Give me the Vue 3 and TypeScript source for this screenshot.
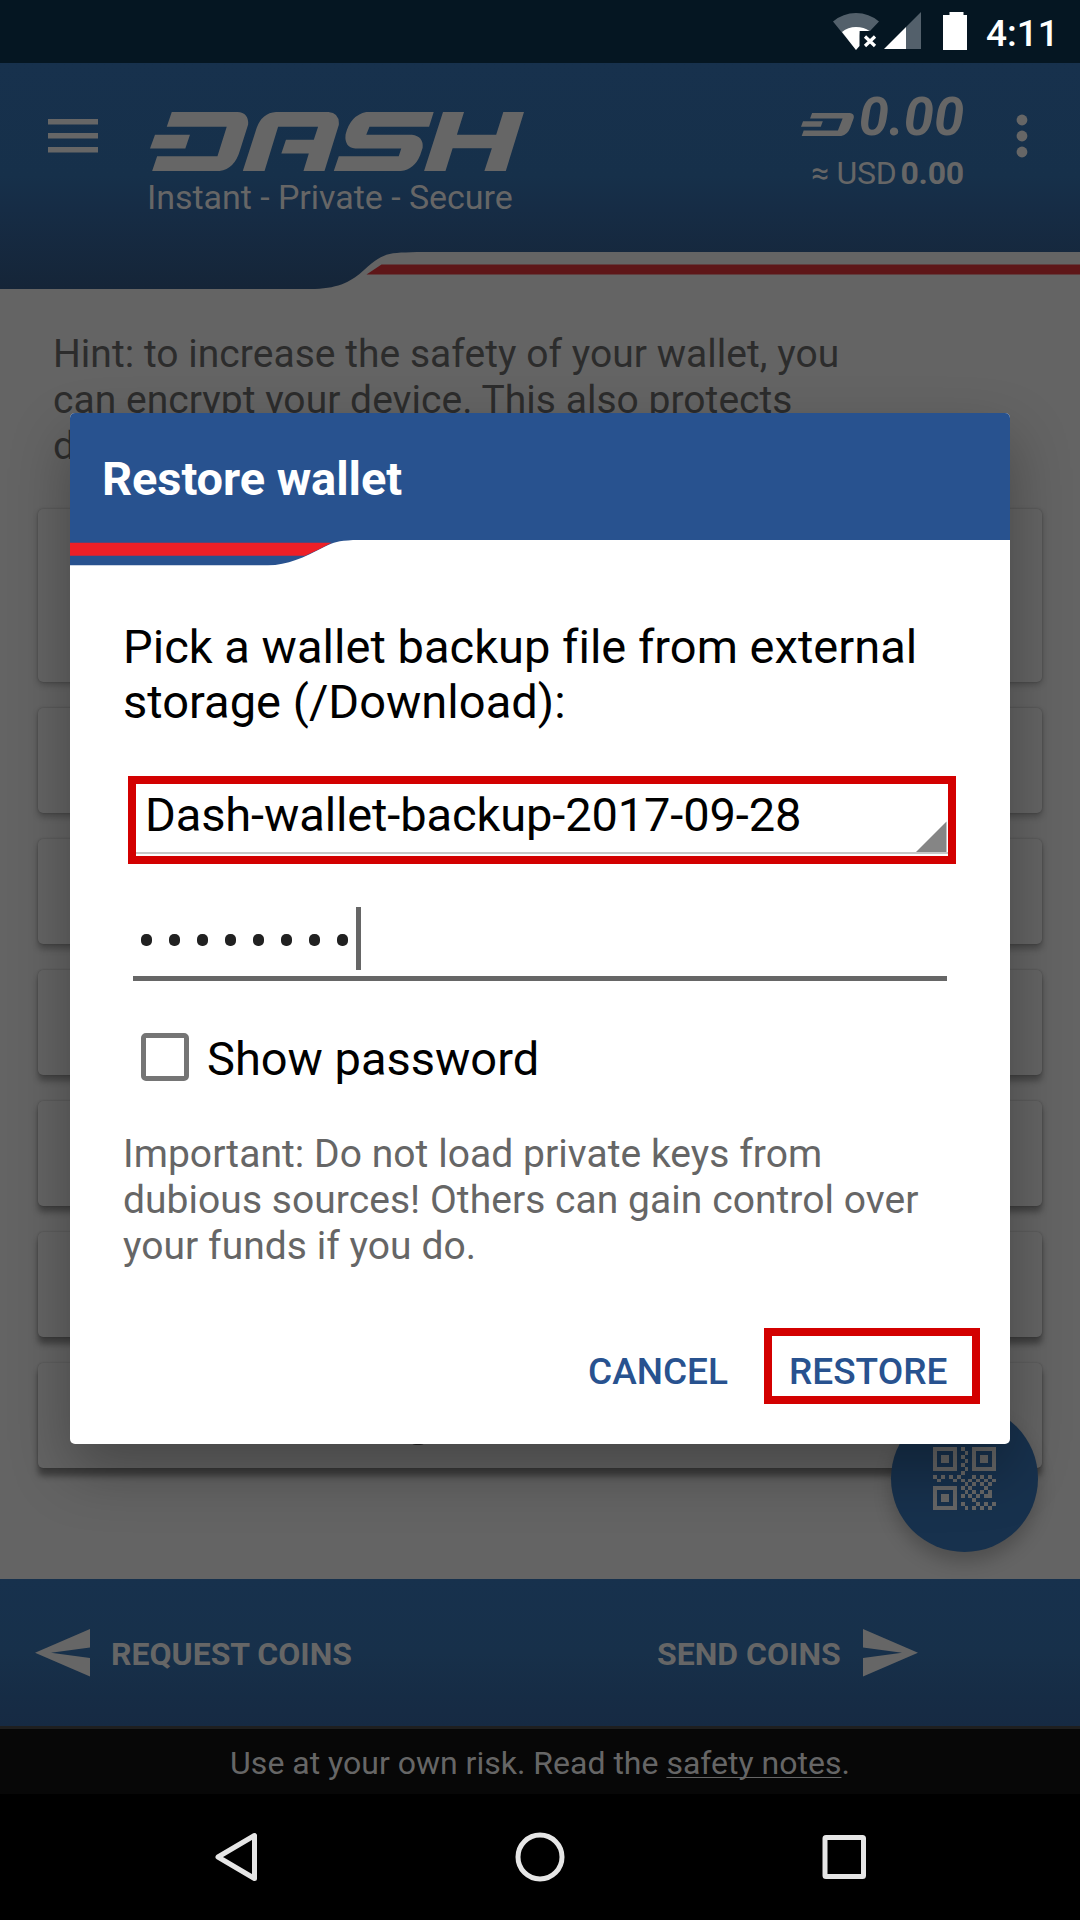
<script setup lang="ts">
import { ref } from 'vue'

const hintLines: string[] = [
  'Hint: to increase the safety of your wallet, you',
  'can encrypt your device. This also protects',
  'd',
]
const warningLines: string[] = [
  'Important: Do not load private keys from',
  'dubious sources! Others can gain control over',
  'your funds if you do.',
]
const cardHeights: number[] = [173, 105, 105, 105, 105, 105, 105]
const backupFile = ref<string>('Dash-wallet-backup-2017-09-28')
const passwordLength = ref<number>(8)

const qrRows: string[] = [
  '1111110100111111',
  '1000010010100001',
  '1011010100101101',
  '1011010010101101',
  '1000010100100001',
  '1111110010111111',
  '0000000100000000',
  '1010101000101010',
  '0100010101010101',
  '0000000010101010',
  '1111110101000100',
  '1000010010101010',
  '1011010101010110',
  '1011010000100000',
  '1000010100010101',
  '1111110010101010',
]
const qrCells = qrRows.flatMap((row, y) =>
  [...row].flatMap((cell, x) => (cell === '1' ? [{ x, y }] : [])),
)
</script>

<template>
  <div class="screen">
    <div class="status">
      <svg class="status-icons" width="140" height="63" viewBox="830 0 140 63">
        <path d="M856 50 833 21.500Q843 13 856 13T879 21.500L870 31H860Z" fill="#53606b" />
        <path d="M856 50 842 32Q848 27 856 27T869.500 31H859.500V46Z" fill="#fff" />
        <path d="M865 36.500l10 9.500M875 36.500l-10 9.500" stroke="#fff" stroke-width="3.200" />
        <path d="M906 27 921 12V49H906Z" fill="#53606b" />
        <path d="M884 49 906 27V49Z" fill="#fff" />
        <path d="M943 15H949.500V12H963.500V15H967V50H943Z" fill="#fff" />
      </svg>
      <span class="time">4:11</span>
    </div>

    <header class="header">
      <svg class="menu" width="50" height="34" viewBox="0 0 50 34">
        <path d="M0 0h50v5.500H0zM0 14h50v5.500H0zM0 28h50v5.500H0z" fill="#666" />
      </svg>
      <div class="brand">
        <svg class="logo" viewBox="419 155 1048 176" preserveAspectRatio="none" role="img" aria-label="Dash">
          <g fill="#666">
            <path d="M480 155H664Q696 157 694 192L671 270Q656 325 614 331H425L439 287H608L634 199H466Z" />
            <path d="M433 223H531L518 264H419Z" />
            <path d="M679 331 718 202Q733 158 772 155H919Q951 158 948 194L908 331H849L864 279H787L800 238H878L890 199H778L740 331Z" />
            <path d="M1214 155 1201 199H1034L1025 223H1153Q1186 228 1183 262L1176 284Q1160 326 1122 331H934L948 287H1116L1123 264H994Q963 260 967 222Q980 165 1025 155Z" />
            <path d="M1240 155H1299L1279 223H1389L1409 155H1467L1416 331H1356L1377 263H1267L1247 331H1187Z" />
          </g>
        </svg>
        <div class="tagline">Instant - Private - Secure</div>
      </div>
      <div class="balance">
        <div class="amount">
          <svg width="53" height="23" viewBox="64 338 158 67" preserveAspectRatio="none">
            <path d="M97 338H210Q224 340 221 353L211 380Q203 401 184 405H66L72 389H174L188 354H91Z M70 362H129L123 378H64Z" fill="#666" />
          </svg>
          <span>0.00</span>
        </div>
        <div class="fiat"><span class="cur">≈ USD</span><b>0.00</b></div>
      </div>
      <svg class="more" width="12" height="44" viewBox="0 0 12 44">
        <g fill="#666"><circle cx="6" cy="6" r="5.400" /><circle cx="6" cy="22" r="5.400" /><circle cx="6" cy="38" r="5.400" /></g>
      </svg>
      <svg class="swoosh" width="780" height="37" viewBox="300 252 780 37">
        <path d="M315 289C340 288 352 281 364 270C384 252 388 253 417 252H1080V289Z" fill="#646464" />
        <path d="M366.500 274.500 381.500 264.500H1080V274.500Z" fill="#5e1618" />
      </svg>
    </header>

    <main class="content">
      <div class="hint">
        <div v-for="line in hintLines" :key="line">{{ line }}</div>
      </div>
      <div class="cards">
        <div
          v-for="(h, i) in cardHeights"
          :key="i"
          class="card"
          :style="{ height: h + 'px', '--lift': 3 + i * 0.7 + 'px', '--shade': 0.22 + i * 0.03 }"
        ></div>
      </div>
      <i class="descender"></i>
      <div class="fab">
        <svg width="63" height="63" viewBox="0 0 16 16" shape-rendering="crispEdges">
          <rect v-for="c in qrCells" :key="c.x + '-' + c.y" :x="c.x" :y="c.y" width="1" height="1" fill="#666" />
        </svg>
      </div>
    </main>

    <div class="actions">
      <div class="action">
        <svg width="55" height="48" viewBox="0 0 55 48"><path d="M0 23.700 55 0V18.500L16 23.700 55 29V47.500Z" fill="#666" /></svg>
        <span class="request">REQUEST COINS</span>
      </div>
      <div class="action send">
        <span>SEND COINS</span>
        <svg width="55" height="48" viewBox="0 0 55 48"><path d="M55 23.700 0 0V18.500L39 23.700 0 29V47.500Z" fill="#666" /></svg>
      </div>
    </div>
    <div class="footer"><span>Use at your own risk. Read the <u>safety notes</u>.</span></div>
    <nav class="nav">
      <svg width="50" height="50" viewBox="0 0 50 50"><path d="M43.500 3.500V46.500L7 25Z" /></svg>
      <svg width="50" height="50" viewBox="0 0 50 50"><circle cx="25" cy="25" r="22" /></svg>
      <svg width="50" height="50" viewBox="0 0 50 50"><rect x="6" y="5.500" width="38.500" height="39" rx="1" /></svg>
    </nav>

    <div class="dialog">
      <div class="title">Restore wallet</div>
      <div class="body">
        <svg class="accent" width="290" height="26" viewBox="70 540 290 26">
          <path d="M70 540H353C338 541 334 542 325 546.500C303 558 288 565 268 565.300H70Z" fill="#28528f" />
          <path d="M70 542.700H331.500Q318 550 305 555.800H70Z" fill="#ed1f27" />
        </svg>
        <div class="message">
          <div>Pick a wallet backup file from external</div>
          <div>storage (/Download):</div>
        </div>
        <div class="spinner">
          <span>{{ backupFile }}</span>
          <svg width="33" height="33" viewBox="0 0 33 33"><path d="M0 33 32.500 0.500V33Z" fill="#858585" /></svg>
        </div>
        <div class="password">
          <i v-for="n in passwordLength" :key="n" class="dot"></i>
          <i class="caret"></i>
        </div>
        <div class="check"><i class="box"></i><span>Show password</span></div>
        <div class="warning">
          <div v-for="line in warningLines" :key="line">{{ line }}</div>
        </div>
        <div class="buttons">
          <span class="cancel">CANCEL</span>
          <span class="restore">RESTORE</span>
        </div>
      </div>
    </div>
  </div>
</template>

<style>
body {
  margin: 0;
  background: #000;
}
</style>

<style scoped>
.screen {
  position: relative;
  width: 1080px;
  height: 1920px;
  overflow: hidden;
  display: flex;
  flex-direction: column;
  background: #646464;
  font-family: Roboto, "Liberation Sans", sans-serif;
  white-space: nowrap;
}
svg {
  display: block;
  flex: none;
}
i {
  display: block;
}
.status {
  height: 63px;
  flex: none;
  display: flex;
  justify-content: flex-end;
  background: #051622;
  color: #fff;
}
.time {
  width: 94px;
  margin-left: 16px;
  font-size: 37px;
  font-weight: 500;
  line-height: 67px;
}
.header {
  position: relative;
  height: 226px;
  flex: none;
  display: flex;
  background: linear-gradient(#17314d 0%, #16304a 50%, #162c45 65%, #152538 100%);
  color: #666;
}
.menu {
  margin: 56px 0 0 48px;
}
.brand {
  width: 560px;
  margin: 49px 0 0 52px;
}
.logo {
  width: 374px;
  height: 59px;
}
.tagline {
  margin: 6px 0 0 -3px;
  font-size: 34px;
  letter-spacing: -0.04px;
  line-height: 40px;
}
.balance {
  width: 254px;
  padding-top: 30px;
  display: flex;
  flex-direction: column;
  align-items: flex-end;
}
.amount {
  display: flex;
  font-size: 54px;
  font-weight: 700;
  font-style: italic;
  line-height: 48px;
}
.amount svg {
  margin: 20px 5px 0 0;
}
.fiat {
  font-size: 32px;
  line-height: 40px;
  margin-top: 12px;
}
.cur {
  letter-spacing: -0.3px;
}
.fiat b {
  margin-left: 4px;
  letter-spacing: -0.2px;
}
.more {
  margin: 51px 0 0 52px;
}
.swoosh {
  position: absolute;
  right: 0;
  bottom: 0;
}
.content {
  position: relative;
  height: 1290px;
  flex: none;
}
.hint {
  padding: 42px 0 0 53px;
  font-size: 39px;
  letter-spacing: 0.03px;
  line-height: 46px;
  color: #2c2c2c;
}
.cards {
  margin: 40px 38px 0;
  display: flex;
  flex-direction: column;
  gap: 26px;
}
.card {
  border-radius: 5px;
  background: #646464;
  box-shadow: 0 var(--lift) 6px rgba(0, 0, 0, var(--shade)), 0 0 2px rgba(0, 0, 0, 0.25);
}
.descender {
  position: absolute;
  left: 409px;
  top: 1147px;
  width: 18px;
  height: 9px;
  border-radius: 0 0 7px 7px;
  background: #222;
}
.fab {
  position: absolute;
  left: 891px;
  top: 1116px;
  width: 147px;
  height: 147px;
  border-radius: 50%;
  display: flex;
  align-items: center;
  justify-content: center;
  background: #17314d;
  box-shadow: 0 10px 18px rgba(0, 0, 0, 0.22);
}
.actions {
  height: 147px;
  flex: none;
  display: flex;
  border-bottom: 3px solid #1f1f1f;
  background: linear-gradient(#17314d 0%, #17304a 50%, #162c45 80%, #162a43 100%);
  color: #666;
  font-size: 32px;
  font-weight: 700;
}
.action {
  width: 623px;
  display: flex;
  padding: 50px 0 0 35px;
  box-sizing: border-box;
  line-height: 48px;
}
.action span {
  padding-top: 1px;
}
.request {
  margin-left: 21px;
}
.send {
  width: 457px;
  padding-left: 34px;
}
.send svg {
  margin-left: 22px;
}
.footer {
  height: 65px;
  flex: none;
  background: #070707;
  color: #666;
  font-size: 32px;
  line-height: 69px;
  text-align: center;
}
.footer u {
  text-decoration-thickness: 1px;
  text-underline-offset: 3px;
  text-decoration-skip-ink: none;
}
.nav {
  height: 126px;
  flex: none;
  display: flex;
  align-items: center;
  justify-content: center;
  gap: 254px;
  background: #000;
}
.nav svg {
  fill: none;
  stroke: #e6e6e6;
  stroke-width: 5px;
  stroke-linejoin: round;
}
.dialog {
  position: absolute;
  left: 70px;
  top: 413px;
  width: 940px;
  height: 1031px;
  border-radius: 5px;
  background: #fff;
  box-shadow: 0 26px 60px rgba(0, 0, 0, 0.3);
  display: flex;
  flex-direction: column;
  color: #000;
  font-size: 47px;
}
.title {
  height: 127px;
  flex: none;
  padding-left: 32px;
  border-radius: 5px 5px 0 0;
  background: #28528f;
  color: #fff;
  font-weight: 700;
  font-size: 47px;
  letter-spacing: -0.08px;
  line-height: 132px;
}
.body {
  position: relative;
  flex: 1;
  padding-top: 79px;
  display: flex;
  flex-direction: column;
}
.accent {
  position: absolute;
  left: 0;
  top: 0;
}
.message {
  padding-left: 53px;
  letter-spacing: 0.03px;
  line-height: 55px;
}
.spinner {
  position: relative;
  margin: 47px 54px 0 58px;
  height: 88px;
  box-sizing: border-box;
  border: 8px solid #d30000;
  padding: 3px 1px 0 9px;
  display: flex;
  justify-content: space-between;
  letter-spacing: -0.11px;
  line-height: 56px;
}
.spinner svg {
  margin-top: 34px;
}
.spinner::after {
  content: "";
  position: absolute;
  left: 0;
  right: 0;
  bottom: 2px;
  height: 2px;
  background: #c8c8c8;
}
.password {
  margin-left: 63px;
  width: 814px;
  height: 117px;
  box-sizing: border-box;
  border-bottom: 5px solid #666;
  padding: 43px 0 0 8px;
  display: flex;
  gap: 17px;
}
.dot {
  width: 11px;
  height: 12px;
  margin-top: 27px;
  border-radius: 5px;
  background: #212121;
}
.caret {
  width: 5px;
  height: 63px;
  margin-left: -9px;
  background: #666;
}
.check {
  margin: 52px 0 0 71px;
  height: 48px;
  display: flex;
  line-height: 51px;
}
.box {
  width: 48px;
  height: 48px;
  box-sizing: border-box;
  border: 5px solid #757575;
  border-radius: 5px;
  margin-right: 18px;
}
.warning {
  margin: 50px 0 0 53px;
  font-size: 39px;
  letter-spacing: 0.05px;
  line-height: 46px;
  color: #666;
}
.buttons {
  margin: 59px 30px 0 0;
  display: flex;
  justify-content: flex-end;
  font-size: 37px;
  font-weight: 500;
  color: #28528f;
  line-height: 60px;
}
.cancel {
  margin-right: 36px;
  padding-top: 14px;
}
.restore {
  width: 216px;
  height: 76px;
  box-sizing: border-box;
  border: 8px solid #d30000;
  padding: 6px 0 0 17px;
}
</style>
